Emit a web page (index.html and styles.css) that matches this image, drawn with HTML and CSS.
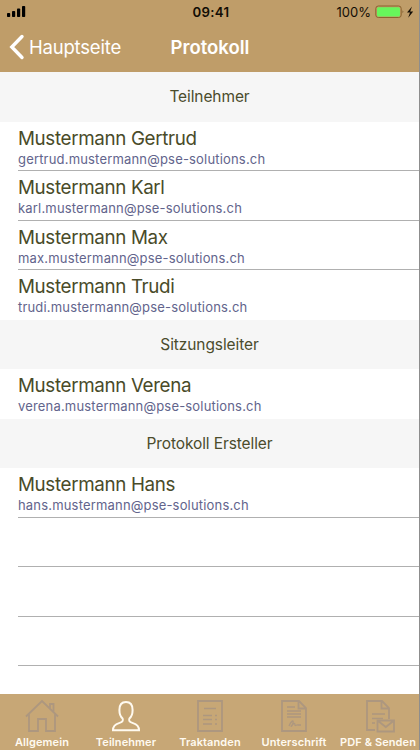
FILE: index.html
```html
<!DOCTYPE html>
<html lang="de">
<head>
    <meta charset="UTF-8">
    <meta name="viewport" content="width=device-width, initial-scale=1.0">
    <title>Protokoll</title>
    <link rel="stylesheet" href="styles.css">
</head>
<body>
    <div class="app">
        <header class="header">
            <div class="status">
                <svg class="signal" width="20" height="12" viewBox="0 0 20 12">
                    <rect x="0" y="7" width="3.2" height="4" rx="0.8"/>
                    <rect x="5" y="5" width="3.2" height="6" rx="0.8"/>
                    <rect x="10" y="2.5" width="3.2" height="8.5" rx="0.8"/>
                    <rect x="15" y="0" width="3.2" height="11" rx="0.8"/>
                </svg>
                <span class="time">09:41</span>
                <div class="power">
                    <span>100%</span>
                    <svg width="40" height="14" viewBox="0 0 40 14">
                        <rect x="0.8" y="1" width="25.4" height="11.5" rx="2.5" fill="none" stroke="#8b632f"/>
                        <rect x="2" y="2.2" width="23" height="9.2" rx="1.5" fill="#67f65b"/>
                        <path d="M27.6 5.2q1.6 1.5 0 3z" fill="#6b4a20"/>
                        <path d="M37 1.5l-5 6h3l-1.8 5.2 5-6.2h-3z" fill="#120d05"/>
                    </svg>
                </div>
            </div>
            <nav class="navbar">
                <a class="back">
                    <svg width="16" height="26" viewBox="0 0 16 26"><path d="M13 2.5L2.8 13 13 23.5" fill="none" stroke="#fff" stroke-width="3.4" stroke-linecap="round"/></svg>
                    <span>Hauptseite</span>
                </a>
                <h1>Protokoll</h1>
            </nav>
        </header>

        <main class="list">
            <h2>Teilnehmer</h2>
            <div class="row line"><p class="name">Mustermann Gertrud</p><p class="mail">gertrud.mustermann@pse-solutions.ch</p></div>
            <div class="row line"><p class="name">Mustermann Karl</p><p class="mail">karl.mustermann@pse-solutions.ch</p></div>
            <div class="row line"><p class="name">Mustermann Max</p><p class="mail">max.mustermann@pse-solutions.ch</p></div>
            <div class="row"><p class="name">Mustermann Trudi</p><p class="mail">trudi.mustermann@pse-solutions.ch</p></div>
            <h2>Sitzungsleiter</h2>
            <div class="row"><p class="name">Mustermann Verena</p><p class="mail">verena.mustermann@pse-solutions.ch</p></div>
            <h2>Protokoll Ersteller</h2>
            <div class="row line"><p class="name">Mustermann Hans</p><p class="mail">hans.mustermann@pse-solutions.ch</p></div>
            <div class="row line"></div>
            <div class="row line"></div>
            <div class="row line"></div>
        </main>

        <footer class="tabs">
            <a class="tab">
                <svg viewBox="0 0 36 36">
                    <path d="M2 18.5L18 3l16 15.5M5 16v17h9V21h8v12h9V16M26 10.5V6h3.5v8"/>
                </svg>
                <span>Allgemein</span>
            </a>
            <a class="tab active">
                <svg viewBox="0 0 36 36">
                    <path d="M14.6 20.5c-2.2-1.8-3.2-4.7-3.2-8.5 0-5.2 2.6-8 6.6-8s6.6 2.8 6.6 8c0 3.8-1 6.7-3.2 8.5-1 2.5.3 3.7 3.6 4.6 4.5 1.2 6 3.200 6 7.200H5c0-4 1.500-6 6-7.200 3.300-.9 4.600-2.100 3.600-4.600z"/>
                </svg>
                <span>Teilnehmer</span>
            </a>
            <a class="tab">
                <svg viewBox="0 0 36 36">
                    <path d="M6 3h24v30H6z"/>
                    <path class="thin" d="M12 10.5h12M11 17.5h9M23 17.5h2M11 21.5h9M23 21.5h2M11 26h9M23 26h2"/>
                </svg>
                <span>Traktanden</span>
            </a>
            <a class="tab">
                <svg viewBox="0 0 36 36">
                    <path d="M6 3h17l7 7v23H6zM22.5 3v7.500H30"/>
                    <path class="thin" d="M11 9h8M11 13h14M11 16h14M11 19h14M13 28c2-5 5-7 4-3s-3 4-1 2 3-2 3 0 2-1 3 0h3"/>
                </svg>
                <span>Unterschrift</span>
            </a>
            <a class="tab">
                <svg viewBox="0 0 36 36">
                    <path d="M15 32H7V3h15l7 7v11M21.5 3v7.500H29"/>
                    <path class="thin" d="M12 16h13M12 20.5h11M12 25h3"/>
                    <path d="M17.5 22.5H34V33.5H17.5zL25.8 29 34 22.5"/>
                </svg>
                <span>PDF &amp; Senden</span>
            </a>
        </footer>
    </div>
</body>
</html>
```
FILE: styles.css
```css
* {
    box-sizing: border-box;
}
body {
    margin: 0;
    font-family: Inter, "Liberation Sans", sans-serif;
    background: #fff;
}
.app {
    width: 420px;
    height: 750px;
    display: flex;
    flex-direction: column;
    border-right: 1px solid #8d8d8d;
    overflow: hidden;
}
h1, h2, p {
    margin: 0;
    font-weight: 400;
}
.header {
    height: 72px;
    background: #bf9d69;
    flex: none;
}
.status {
    height: 23px;
    display: grid;
    grid-template-columns: 1fr auto 1fr;
    align-items: center;
    padding: 0 4px 0 7px;
    color: #120d05;
}
.time {
    font-size: 13.2px;
    font-weight: 600;
    letter-spacing: 0.3px;
}
.power {
    display: flex;
    justify-content: flex-end;
    align-items: center;
    gap: 4px;
    font-size: 13px;
}
.navbar {
    height: 48px;
    display: grid;
    grid-template-columns: 1fr auto 1fr;
    align-items: center;
    padding-left: 9px;
    padding-right: 8px;
    color: #fff;
}
.back {
    display: flex;
    align-items: center;
    gap: 4px;
    font-size: 18.5px;
    letter-spacing: -0.2px;
}
h1 {
    font-size: 18.5px;
    font-weight: 600;
}
.list {
    height: 622px;
    flex: none;
}
h2 {
    height: 49.5px;
    line-height: 49px;
    background: #f6f6f6;
    color: #4b4c2c;
    font-size: 15.5px;
    letter-spacing: -0.1px;
    text-align: center;
}
.row {
    height: 49.5px;
    margin-left: 18px;
    padding-top: 5px;
}
.line {
    border-bottom: 1px solid #b0b0b0;
}
.name {
    font-size: 18.8px;
    line-height: 24px;
    letter-spacing: -0.35px;
    color: #494b29;
}
.mail {
    font-size: 13px;
    line-height: 16px;
    letter-spacing: 0.18px;
    color: #62648c;
}
.tabs {
    height: 56px;
    flex: none;
    display: grid;
    grid-template-columns: repeat(5, 84px);
    background: #c7a776;
}
.tab {
    display: flex;
    flex-direction: column;
    align-items: center;
    padding-top: 4px;
    color: #fffaf0;
    font-size: 11px;
    font-weight: 600;
    line-height: 16px;
    white-space: nowrap;
}
.tab svg {
    width: 36px;
    height: 36px;
    fill: none;
    stroke: #ad977f;
    stroke-width: 1.8;
}
.tab .thin {
    stroke-width: 1.3;
}
.tab.active svg {
    stroke: #fffaf0;
    stroke-width: 2;
}
.tab span {
    letter-spacing: 0.1px;
}
```
